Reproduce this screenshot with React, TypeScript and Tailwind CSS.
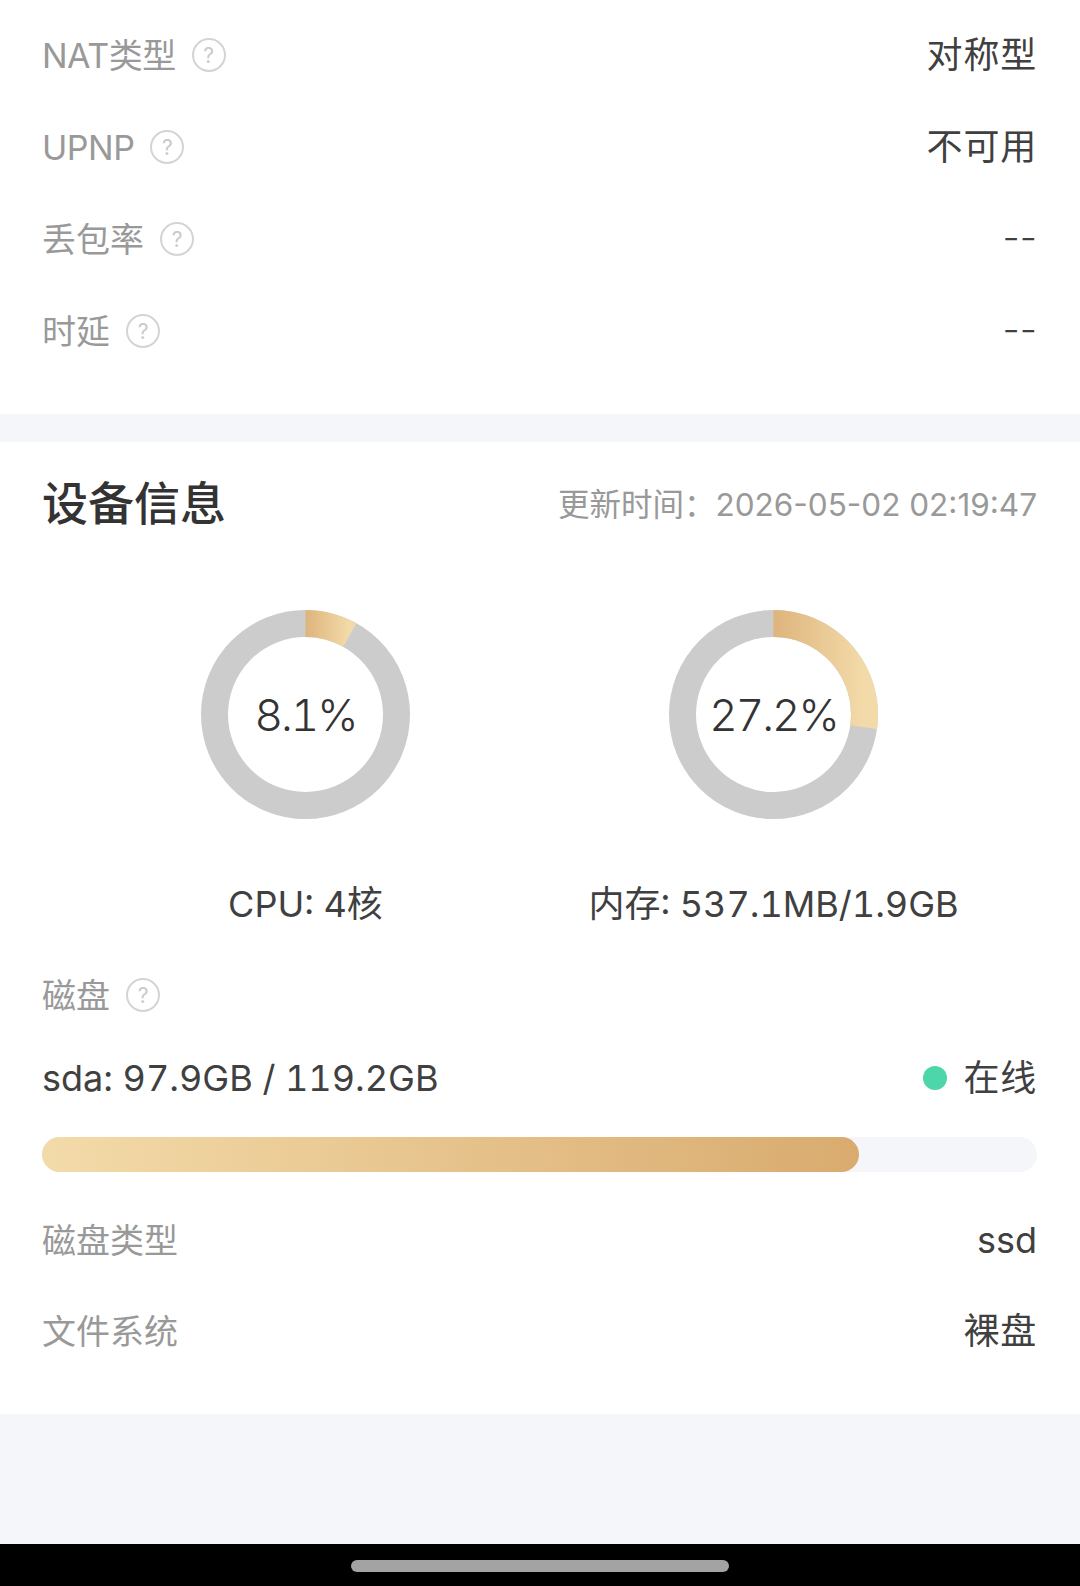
const FONT = "font-['Inter','Noto_Sans_CJK_SC',sans-serif] tabular-nums";

function Help() {
  return (
    <span className="flex h-[34px] w-[34px] shrink-0 items-center justify-center rounded-full border-2 border-[#d4d4d4] text-[21px] leading-none text-[#c9c9c9]">
      ?
    </span>
  );
}

function NetRow({ label, latin, value }: { label: string; latin?: boolean; value: string }) {
  return (
    <div className="flex h-[92px] items-center justify-between">
      <div className="flex items-center gap-[16px] text-[34px] text-[#999999]">
        <span className={latin ? "tracking-[-0.5px]" : ""}>{label}</span>
        <Help />
      </div>
      {value === "--" ? (
        <span className="pb-[4px] text-[38px] font-light normal-nums text-[#404040]">--</span>
      ) : (
        <span className="text-[36px] tracking-[0.8px] text-[#404040]">{value}</span>
      )}
    </div>
  );
}

function Donut({ percent, gradId }: { percent: number; gradId: string }) {
  const r = 91;
  const c = 104.5;
  const angle = (percent / 100) * 2 * Math.PI;
  const x = c + r * Math.sin(angle);
  const y = c - r * Math.cos(angle);
  const large = percent > 50 ? 1 : 0;
  return (
    <div className="relative h-[209px] w-[209px]">
      <svg width="209" height="209" viewBox="0 0 209 209">
        <defs>
          <linearGradient id={gradId} x1="0" y1="0" x2="1" y2="0">
            <stop offset="0%" stopColor="#deb47c" />
            <stop offset="100%" stopColor="#f3dba9" />
          </linearGradient>
        </defs>
        <circle cx={c} cy={c} r={r} fill="none" stroke="#cccccc" strokeWidth="27" />
        <path
          d={`M ${c} ${c - r} A ${r} ${r} 0 ${large} 1 ${x} ${y}`}
          fill="none"
          stroke={`url(#${gradId})`}
          strokeWidth="27"
        />
      </svg>
      <div className="absolute inset-0 flex items-center justify-center text-[44px] font-light tracking-[-2px] text-[#333333]">
        {percent}%
      </div>
    </div>
  );
}

function Gauge({ percent, gradId, caption }: { percent: number; gradId: string; caption: string }) {
  return (
    <div className="flex w-[468px] flex-col items-center">
      <Donut percent={percent} gradId={gradId} />
      <div className="mt-[60px] text-[36px] leading-[50px] text-[#404040]">{caption}</div>
    </div>
  );
}

export default function App() {
  return (
    <div className={`${FONT} flex h-[1586px] w-[1080px] flex-col bg-[#f5f6fa]`}>
      <section className="bg-white pt-[9px] pr-[43px] pb-[37px] pl-[42px]">
        <NetRow label="NAT类型" latin value="对称型" />
        <NetRow label="UPNP" latin value="不可用" />
        <NetRow label="丢包率" value="--" />
        <NetRow label="时延" value="--" />
      </section>

      <section className="mt-[28px] bg-white pr-[43px] pl-[42px]">
        <div className="flex h-[122px] items-center justify-between">
          <h2 className="text-[46px] font-medium text-[#333333]">设备信息</h2>
          <span className="pt-[4px] text-[31.5px] normal-nums text-[#999999]">更新时间：2026-05-02 02:19:47</span>
        </div>

        <div className="mt-[46px] flex justify-center">
          <Gauge percent={8.1} gradId="cpuGrad" caption="CPU: 4核" />
          <Gauge percent={27.2} gradId="memGrad" caption="内存: 537.1MB/1.9GB" />
        </div>

        <div className="mt-[20px] flex h-[92px] items-center gap-[16px] text-[34px] text-[#999999]">
          <span>磁盘</span>
          <Help />
        </div>

        <div className="mt-[1px] flex h-[72px] items-center justify-between text-[36px] text-[#404040]">
          <span>sda: 97.9GB / 119.2GB</span>
          <div className="flex items-center gap-[16px]">
            <span className="h-[24px] w-[24px] rounded-full bg-[#4dd6aa]" />
            <span className="tracking-[0.8px]">在线</span>
          </div>
        </div>

        <div className="mt-[23px] h-[35px] rounded-full bg-[#f5f6fa]">
          <div className="h-full w-[82.1%] rounded-full bg-gradient-to-r from-[#f3dba9] to-[#d9ab6f]" />
        </div>

        <div className="mt-[22px] flex h-[92px] items-center justify-between">
          <span className="text-[34px] text-[#999999]">磁盘类型</span>
          <span className="text-[36px] text-[#404040]">ssd</span>
        </div>
        <div className="flex h-[92px] items-center justify-between pb-[2px]">
          <span className="text-[34px] text-[#999999]">文件系统</span>
          <span className="text-[36px] tracking-[0.8px] text-[#404040]">裸盘</span>
        </div>
        <div className="h-[36px]" />
      </section>

      <div className="flex-1" />

      <div className="flex h-[42px] justify-center bg-black pt-[16px]">
        <div className="h-[12px] w-[378px] rounded-full bg-[#a3a3a3]" />
      </div>
    </div>
  );
}
